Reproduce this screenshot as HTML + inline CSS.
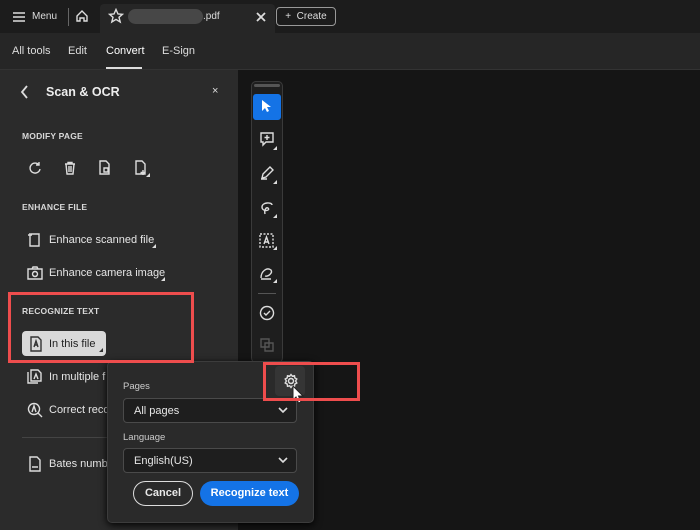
<!DOCTYPE html>
<html><head><meta charset="utf-8"><style>
*{box-sizing:border-box;margin:0;padding:0}
body{width:700px;height:530px;overflow:hidden;background:#151515;font-family:"Liberation Sans",sans-serif;color:#e8e8e8;position:relative}
.a{position:absolute}
.t{font-size:11px;color:#ddd}
.h{font-size:8.5px;font-weight:bold;letter-spacing:.2px;color:#d8d8d8}
.it{font-size:11px;color:#e6e6e6}
svg{position:absolute;fill:none;stroke:#ddd;stroke-width:1.4}
.tri{position:absolute;width:0;height:0;border-left:4px solid transparent;border-bottom:4px solid #ddd}
</style></head><body>
<div class="a" style="left:0;top:0;width:700px;height:33px;background:#1c1c1c"></div>
<div class="a" style="left:100px;top:4px;width:175px;height:29px;background:#262626;border-radius:4px 4px 0 0"></div>
<svg style="left:12px;top:11px" width="14" height="12"><path d="M1 2h12M1 6h12M1 10h12"/></svg>
<div class="a t" style="left:32px;top:11px;font-size:10px">Menu</div>
<div class="a" style="left:68px;top:8px;width:1px;height:18px;background:#666"></div>
<svg style="left:75px;top:9px" width="14" height="14"><path d="M2 7L7 2L12 7V12H9V9H5V12H2Z"/></svg>
<svg style="left:108px;top:8px" width="16" height="16"><path d="M8 1.5L10 6L14.5 6.3L11 9.3L12.2 14L8 11.4L3.8 14L5 9.3L1.5 6.3L6 6Z"/></svg>
<div class="a" style="left:128px;top:9px;width:75px;height:15px;background:#555;border-radius:8px;opacity:.7"></div>
<div class="a t" style="left:203px;top:11px;font-size:10px">.pdf</div>
<svg style="left:256px;top:12px" width="10" height="10"><path d="M1 1L9 9M9 1L1 9" style="stroke-width:1.8"/></svg>
<div class="a" style="left:276px;top:7px;width:60px;height:19px;border:1px solid #999;border-radius:4px;font-size:10px;color:#ddd;text-align:center;line-height:17px">+&nbsp; Create</div>
<div class="a" style="left:0;top:33px;width:700px;height:37px;background:#262626;border-bottom:1px solid #333"></div>
<div class="a t" style="left:12px;top:45px">All tools</div>
<div class="a t" style="left:68px;top:45px">Edit</div>
<div class="a t" style="left:106px;top:45px;color:#fff">Convert</div>
<div class="a" style="left:106px;top:67px;width:36px;height:2px;background:#ddd"></div>
<div class="a t" style="left:162px;top:45px">E-Sign</div>
<div class="a" style="left:0;top:70px;width:238px;height:460px;background:#2b2b2b"></div>
<svg style="left:20px;top:85px" width="10" height="14"><path d="M7 1L2 7L7 13" style="stroke-width:1.8"/></svg>
<div class="a" style="left:46px;top:85px;font-size:12.5px;font-weight:bold;color:#eee">Scan &amp; OCR</div>
<div class="a t" style="left:212px;top:85px">×</div>
<div class="a h" style="left:22px;top:131px">MODIFY PAGE</div>
<svg style="left:28px;top:161px" width="14" height="14"><path d="M11 4A5 5 0 1 0 12 8M11 1V4H8"/></svg>
<svg style="left:63px;top:161px" width="14" height="14"><path d="M2 3H12M5 3V1.5H9V3M3 3L4 13H10L11 3M6 5V11M8 5V11"/></svg>
<svg style="left:97px;top:160px" width="16" height="16"><path d="M3 1H9L12 4V14H3ZM7 8H11V12H7Z"/></svg>
<svg style="left:133px;top:160px" width="18" height="18"><path d="M3 1H9L12 4V14H3ZM10 10V15M7.5 12.5H12.5"/></svg>
<div class="tri" style="left:146px;top:173px"></div>
<div class="a h" style="left:22px;top:202px">ENHANCE FILE</div>
<svg style="left:27px;top:232px" width="16" height="16"><path d="M4 2H12V14H3V5M1 3H5M3 1V5"/></svg>
<div class="a it" style="left:49px;top:234px">Enhance scanned file</div>
<div class="tri" style="left:152px;top:244px"></div>
<svg style="left:27px;top:265px" width="16" height="16"><path d="M1 4H15V14H1ZM5 4L6 2H10L11 4M8 6.5A2.5 2.5 0 1 0 8.01 6.5"/></svg>
<div class="a it" style="left:49px;top:267px">Enhance camera image</div>
<div class="tri" style="left:161px;top:277px"></div>
<div class="a h" style="left:22px;top:306px">RECOGNIZE TEXT</div>
<div class="a" style="left:22px;top:331px;width:84px;height:25px;background:#d9d9d9;border-radius:4px"></div>
<svg style="left:29px;top:336px;stroke:#333" width="14" height="16"><path d="M2 1H9L12 4V15H2ZM5 11L7 5L9 11M5.8 9H8.2"/></svg>
<div class="a it" style="left:49px;top:338px;color:#222">In this file</div>
<div class="tri" style="left:99px;top:348px;border-bottom-color:#333"></div>
<svg style="left:27px;top:369px" width="16" height="16"><path d="M1 3V14H11M4 1H11L14 4V12H4ZM7 10L9 5L11 10"/></svg>
<div class="a it" style="left:49px;top:371px">In multiple f</div>
<svg style="left:27px;top:402px" width="16" height="16"><path d="M7 1.5A5.5 5.5 0 1 0 7.01 1.5M11 11L15 15M5 10L7 4L9 10"/></svg>
<div class="a it" style="left:49px;top:404px">Correct reco</div>
<div class="a" style="left:22px;top:437px;width:90px;height:1px;background:#444"></div>
<svg style="left:27px;top:456px" width="16" height="16"><path d="M3 1H10L13 4V15H3ZM5 11H11"/></svg>
<div class="a it" style="left:49px;top:458px">Bates numb</div>
<div class="a" style="left:251px;top:81px;width:32px;height:282px;background:#1e1e1e;border:1px solid #3a3a3a;border-radius:5px"></div>
<div class="a" style="left:254px;top:84px;width:26px;height:3px;background:#555;border-radius:2px"></div>
<div class="a" style="left:253px;top:94px;width:28px;height:26px;background:#1473e6;border-radius:3px"></div>
<svg style="left:261px;top:99px;fill:#fff;stroke:none" width="12" height="14"><path d="M1 1L1 12L4 9L6 13L8 12L6 8L10 8Z"/></svg>
<svg style="left:259px;top:131px" width="16" height="16"><path d="M2 2H14V11H7L4 14V11H2ZM8 4V9M5.5 6.5H10.5"/></svg>
<svg style="left:259px;top:165px" width="16" height="16"><path d="M3 13L4 9L11 2L14 5L7 12ZM2 14H8"/></svg>
<svg style="left:259px;top:200px" width="16" height="16"><path d="M13 5C13 2 3 2 3 7C3 12 12 11 9 8C7 7 5 10 6 14"/></svg>
<svg style="left:258px;top:232px" width="17" height="17"><path d="M2 2H15V15H2Z" style="stroke-dasharray:2 1.5"/><path d="M6 12L8.5 5L11 12M7 10H10"/></svg>
<svg style="left:259px;top:265px" width="16" height="16"><path d="M2 13C2 6 8 2 12 5C14 8 9 12 6 11M2 14H12"/></svg>
<div class="a" style="left:258px;top:293px;width:18px;height:1px;background:#555"></div>
<svg style="left:259px;top:305px" width="16" height="16"><path d="M8 1.5A6.5 6.5 0 1 0 8.01 1.5M5 8L7 10L11 6"/></svg>
<svg style="left:259px;top:337px;stroke:#555" width="16" height="16"><path d="M2 2H10V10H2ZM6 6H14V14H6Z"/></svg>
<div class="tri" style="left:273px;top:146px"></div>
<div class="tri" style="left:273px;top:180px"></div>
<div class="tri" style="left:273px;top:214px"></div>
<div class="tri" style="left:273px;top:246px"></div>
<div class="tri" style="left:273px;top:279px"></div>
<div class="a" style="left:107px;top:361px;width:207px;height:162px;background:#2a2a2a;border:1px solid #3c3c3c;border-radius:5px;box-shadow:0 2px 8px #000"></div>
<div class="a" style="left:275px;top:366px;width:30px;height:30px;background:#353535;border-radius:4px"></div>
<svg style="left:283px;top:373px" width="16" height="16"><path d="M8 5.5A2.5 2.5 0 1 0 8.01 5.5M8 1.5L9.3 3.2L11.5 2.7L11.8 4.9L13.8 6L12.6 8L13.8 10L11.8 11.1L11.5 13.3L9.3 12.8L8 14.5L6.7 12.8L4.5 13.3L4.2 11.1L2.2 10L3.4 8L2.2 6L4.2 4.9L4.5 2.7L6.7 3.2Z"/></svg>
<svg style="left:291px;top:385px;fill:#fff;stroke:#222;stroke-width:1" width="14" height="20"><path d="M2 1L2 15L5 12L7.5 18L10 17L7.5 11L12 11Z"/></svg>
<div class="a" style="left:123px;top:381px;font-size:9.5px;color:#ccc">Pages</div>
<div class="a" style="left:123px;top:398px;width:174px;height:25px;background:#1e1e1e;border:1px solid #4a4a4a;border-radius:4px"></div>
<div class="a it" style="left:134px;top:405px">All pages</div>
<svg style="left:278px;top:406px" width="10" height="8"><path d="M1 2L5 6L9 2" style="stroke-width:1.6"/></svg>
<div class="a" style="left:123px;top:432px;font-size:9.5px;color:#ccc">Language</div>
<div class="a" style="left:123px;top:448px;width:174px;height:25px;background:#1e1e1e;border:1px solid #4a4a4a;border-radius:4px"></div>
<div class="a it" style="left:134px;top:455px">English(US)</div>
<svg style="left:278px;top:456px" width="10" height="8"><path d="M1 2L5 6L9 2" style="stroke-width:1.6"/></svg>
<div class="a" style="left:133px;top:481px;width:60px;height:25px;border:1.5px solid #ddd;border-radius:13px;font-size:11px;font-weight:bold;text-align:center;line-height:22px">Cancel</div>
<div class="a" style="left:200px;top:481px;width:99px;height:25px;background:#1473e6;border-radius:13px;font-size:11px;font-weight:bold;text-align:center;line-height:25px;color:#fff">Recognize text</div>
<div class="a" style="left:8px;top:292px;width:186px;height:71px;border:3px solid #ee4d4d"></div>
<div class="a" style="left:263px;top:362px;width:97px;height:39px;border:3px solid #ee4d4d"></div>
</body></html>
